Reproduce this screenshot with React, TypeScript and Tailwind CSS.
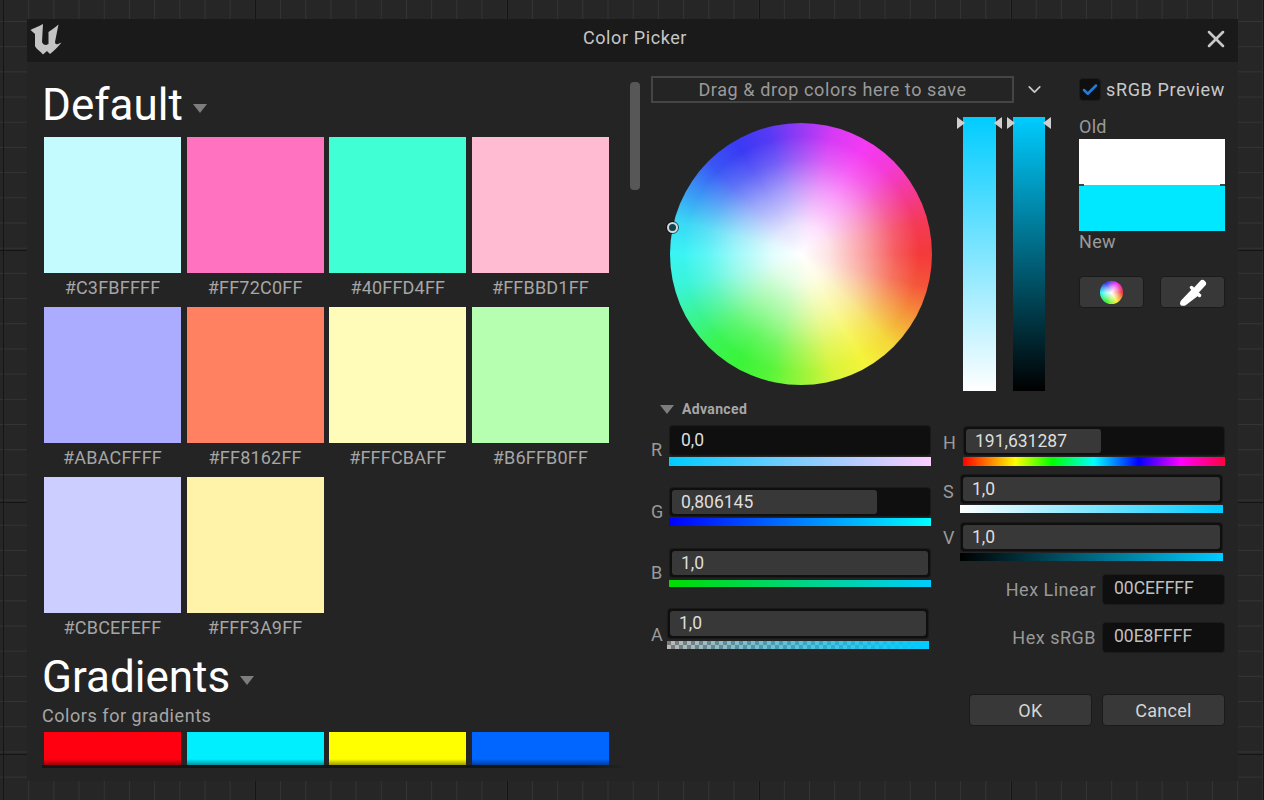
import React from 'react';
import { ChevronDown, Check, X } from 'lucide-react';

const FONT = "font-['Roboto','Liberation_Sans',sans-serif]";

const swatches = [
    { hex: '#C3FBFFFF', bg: 'bg-[#c3fbff]' },
    { hex: '#FF72C0FF', bg: 'bg-[#ff72c0]' },
    { hex: '#40FFD4FF', bg: 'bg-[#40ffd4]' },
    { hex: '#FFBBD1FF', bg: 'bg-[#ffbbd1]' },
    { hex: '#ABACFFFF', bg: 'bg-[#abacff]' },
    { hex: '#FF8162FF', bg: 'bg-[#ff8162]' },
    { hex: '#FFFCBAFF', bg: 'bg-[#fffcba]' },
    { hex: '#B6FFB0FF', bg: 'bg-[#b6ffb0]' },
    { hex: '#CBCEFEFF', bg: 'bg-[#cbcefe]' },
    { hex: '#FFF3A9FF', bg: 'bg-[#fff3a9]' },
];

const gradientSwatches = ['bg-[#ff0010]', 'bg-[#00efff]', 'bg-[#ffff00]', 'bg-[#0066ff]'];

function Caret({ className }: { className?: string }) {
    return (
        <svg width="14" height="9" viewBox="0 0 14 9" className={className}>
            <path d="M0 0h14L7 9z" fill="#7d7d7d" />
        </svg>
    );
}

function UnrealLogo() {
    return (
        <svg width="33" height="33" viewBox="30 22 33 33" className="mb-[2px]">
            <path
                d="M30.5 29C33 27.5 38 26 43 23L42 41Q43 44 46 44L48.5 43L48.500 31C51 29 55 27 58.5 23.5L55 41Q55 44 58 43L61.5 41.5C58 46 54 50 50 53L47 50L43 53.5C40 50 36 48 35 45L35 33Z"
                fill="#c4c4c4"
            />
        </svg>
    );
}

function Eyedropper() {
    return (
        <svg width="28" height="28" viewBox="0 0 28 28">
            <path d="M13 11L19.500 17.500L7 27C5.500 28 3.500 28 2 27.500L1 26C1 24.500 1.500 23 2.500 22z" fill="#fff" />
            <path d="M12.500 9.500L20.500 17.500" stroke="#fff" strokeWidth="3.500" strokeLinecap="round" />
            <path d="M17.500 12L23.500 5.500" stroke="#fff" strokeWidth="7" strokeLinecap="round" />
        </svg>
    );
}

interface ChannelProps {
    label: string;
    value: string;
    labelClass: string;
    width: string;
    inputHeight: string;
    fill: string;
    bar: string;
    barClass: string;
    className?: string;
    checker?: boolean;
}

function Channel({ label, value, labelClass, width, inputHeight, fill, bar, barClass, className, checker }: ChannelProps) {
    return (
        <div className={`flex ${className ?? ''}`}>
            <div className={`${labelClass} shrink-0 text-[18px] leading-[20px] text-[#9a9a9a]`}>{label}</div>
            <div className={width}>
                <div className={`${inputHeight} rounded-[4px] border border-[#1a1a1a] bg-[#0f0f0f] p-[2px]`}>
                    <div className={`h-full rounded-[3px] ${fill}`}>
                        <div className="pl-[9px] text-[17.5px] leading-[25px] whitespace-nowrap text-[#dedede]">{value}</div>
                    </div>
                </div>
                {checker ? (
                    <div className={`${barClass} bg-[repeating-conic-gradient(#b8b8b8_0_25%,#7a7a7a_0_50%)] bg-[length:8px_8px]`}>
                        <div className={`h-full ${bar}`} />
                    </div>
                ) : (
                    <div className={`${barClass} ${bar}`} />
                )}
            </div>
        </div>
    );
}

function HandledBar({ gradient, width }: { gradient: string; width: string }) {
    return (
        <div className={`relative h-[274px] ${width} ${gradient}`}>
            <div className="absolute top-0 -left-[6px] h-0 w-0 border-y-[6px] border-l-[8px] border-y-transparent border-l-[#cfcfcf]" />
            <div className="absolute top-0 -right-[6px] h-0 w-0 border-y-[6px] border-r-[8px] border-y-transparent border-r-[#cfcfcf]" />
        </div>
    );
}

function HexRow({ label, value, className }: { label: string; value: string; className?: string }) {
    return (
        <div className={`flex items-center justify-end ${className ?? ''}`}>
            <span className="mr-[6px] text-[18px] tracking-[0.5px] text-[#999999]">{label}</span>
            <div className="h-[31px] w-[123px] rounded-[4px] border border-[#1c1c1c] bg-[#0f0f0f] pl-[11px] text-[17.5px] leading-[26px] text-[#c0c0c0]">
                {value}
            </div>
        </div>
    );
}

function DialogButton({ label }: { label: string }) {
    return (
        <div className="flex h-[32px] w-[123px] items-center justify-center rounded-[4px] border border-[#1a1a1a] bg-[#383838] text-[18px] tracking-[0.3px] text-[#d4d4d4]">
            {label}
        </div>
    );
}

export default function App() {
    return (
        <div
            className={`${FONT} h-[800px] w-[1264px] overflow-hidden bg-[#262626] bg-[linear-gradient(to_right,#151515_1px,transparent_1px),linear-gradient(to_bottom,#151515_1px,transparent_1px),linear-gradient(to_right,#343434_1px,transparent_1px),linear-gradient(to_bottom,#343434_1px,transparent_1px)] bg-[length:252px_252px,252px_252px,25.2px_25.2px,25.2px_25.2px] bg-[position:3px_250px,3px_250px,3px_21px,3px_21px] pt-[19px] pl-[27px]`}
        >
            <div className="h-[762px] w-[1211px] bg-[#242424]">
                {/* title bar */}
                <div className="flex h-[43px] items-center justify-between bg-[#1a1a1a] pr-[8px] pl-[3px]">
                    <UnrealLogo />
                    <span className="mb-[5px] ml-[5px] text-[18px] leading-[24px] tracking-[0.6px] text-[#c6c6c6]">Color Picker</span>
                    <X size={28} strokeWidth={2.2} color="#c8c8c8" className="mb-[3px]" />
                </div>

                <div className="flex">
                    {/* left list */}
                    <div className="h-[706px] w-[603px] shrink-0 overflow-hidden pt-[19px] pl-[15px]">
                        <div className="flex h-[48px] items-center">
                            <span className="text-[44px] leading-[48px] font-normal text-white">Default</span>
                            <Caret className="mt-[6px] ml-[10px]" />
                        </div>
                        <div className="mt-[8px] grid grid-cols-[137px_137px_137px_137px] gap-x-[5.67px] pl-[2px]">
                            {swatches.map((s) => (
                                <div key={s.hex} className="h-[170px]">
                                    <div className={`h-[136px] w-full ${s.bg}`} />
                                    <div className="mt-[3px] text-center text-[18px] leading-[23px] tracking-[0.2px] text-[#a6a6a6]">{s.hex}</div>
                                </div>
                            ))}
                        </div>
                        <div className="mt-[6px] flex h-[48px] items-center">
                            <span className="text-[44px] leading-[48px] font-normal text-white">Gradients</span>
                            <Caret className="mt-[6px] ml-[10px]" />
                        </div>
                        <div className="mt-[4px] text-[18px] leading-[22px] tracking-[0.55px] text-[#a6a6a6]">Colors for gradients</div>
                        <div className="mt-[5px] grid grid-cols-[137px_137px_137px_137px] gap-x-[5.67px] pl-[2px]">
                            {gradientSwatches.map((bg) => (
                                <div key={bg} className={`h-[33px] ${bg}`}>
                                    <div className="h-[27px]" />
                                    <div className="h-[6px] bg-linear-to-b/srgb from-transparent to-black/40" />
                                </div>
                            ))}
                        </div>
                        <div className="h-[3px] w-[585px] bg-[linear-gradient(to_right,#141414_92%,transparent)]" />
                    </div>

                    {/* scrollbar */}
                    <div className="w-[21px] shrink-0 pt-[20px]">
                        <div className="h-[108px] w-[10px] rounded-[4px] bg-[#575757]" />
                    </div>

                    {/* right side */}
                    <div className="pt-[14px]">
                        <div className="flex">
                            <div className="w-[394px] shrink-0">
                                <div className="flex items-center">
                                    <div className="flex h-[27px] w-[363px] items-center justify-center border-2 border-[#454545] text-[18px] tracking-[0.6px] text-[#9a9a9a]">
                                        Drag &amp; drop colors here to save
                                    </div>
                                    <ChevronDown size={21} color="#c8c8c8" className="ml-[10px]" />
                                </div>
                                <div className="mt-[14px] flex">
                                    <div className="relative mt-[6px] ml-[19px] h-[262px] w-[262px] rounded-full bg-[conic-gradient(from_90deg,#f43a3a,#f4563a,#f4973a,#f4d83a,#f4f43a,#d8f43a,#97f43a,#56f43a,#3af43a,#3af456,#3af497,#3af4d8,#3af4f4,#3ad8f4,#3a97f4,#3a56f4,#3a3af4,#563af4,#973af4,#d83af4,#f43af4,#f43ad8,#f43a97,#f43a56,#f43a3a)]">
                                        <div className="h-full w-full rounded-full bg-[radial-gradient(circle_closest-side,#ffffff_0%,rgba(255,255,255,0.85)_22%,rgba(255,255,255,0.5)_50%,rgba(255,255,255,0.18)_72%,rgba(255,255,255,0)_90%)]" />
                                        <div className="absolute top-[99px] -left-[3px] h-[11px] w-[11px] rounded-full border-2 border-[#d8d8d8] bg-[#10424f] ring-1 ring-black/60" />
                                    </div>
                                    <div className="ml-[31px] flex gap-[17px]">
                                        <HandledBar width="w-[33px]" gradient="bg-linear-to-b/srgb from-[#00ccff] to-white" />
                                        <HandledBar width="w-[32px]" gradient="bg-linear-to-b/srgb from-[#00ccff] to-black" />
                                    </div>
                                </div>
                            </div>

                            <div className="ml-[34px] w-[146px] shrink-0 pt-[2px]">
                                <div className="flex h-[23px] items-center">
                                    <div className="flex h-[23px] w-[23px] items-center justify-center rounded-[4px] border border-[#1c1c1c] bg-[#0f0f0f]">
                                        <Check size={18} strokeWidth={3.4} color="#1a7fe0" />
                                    </div>
                                    <span className="ml-[5px] text-[18px] leading-[23px] tracking-[0.65px] whitespace-nowrap text-[#c9c9c9]">sRGB Preview</span>
                                </div>
                                <div className="mt-[15px] mb-[2px] text-[18px] leading-[21px] tracking-[0.3px] text-[#9a9a9a]">Old</div>
                                <div className="relative">
                                    <div className="h-[46px] bg-white" />
                                    <div className="h-[46px] bg-[#00e8ff]" />
                                    <div className="absolute top-[45px] left-0 h-[2px] w-[5px] bg-[#444444]" />
                                    <div className="absolute top-[45px] right-0 h-[2px] w-[5px] bg-[#444444]" />
                                </div>
                                <div className="text-[18px] leading-[21px] tracking-[0.3px] text-[#9a9a9a]">New</div>
                                <div className="mt-[24px] flex justify-between">
                                    <div className="flex h-[32px] w-[65px] items-center justify-center rounded-[4px] border border-[#1a1a1a] bg-[#383838]">
                                        <div className="h-[23px] w-[23px] rounded-full bg-[conic-gradient(from_90deg,#f43a3a,#f4f43a,#3af43a,#3af4f4,#3a3af4,#f43af4,#f43a3a)]">
                                            <div className="h-full w-full rounded-full bg-[radial-gradient(circle_closest-side,#ffffff_0%,rgba(255,255,255,0.5)_50%,rgba(255,255,255,0)_90%)]" />
                                        </div>
                                    </div>
                                    <div className="flex h-[32px] w-[65px] items-center justify-center rounded-[4px] border border-[#1a1a1a] bg-[#383838]">
                                        <Eyedropper />
                                    </div>
                                </div>
                            </div>
                        </div>

                        <div className="mt-[10px] flex h-[16px] items-center pl-[9px]">
                            <Caret />
                            <span className="ml-[8px] text-[14px] font-bold tracking-[0.35px] text-[#a6a6a6]">Advanced</span>
                        </div>

                        <div className="mt-[8px] flex">
                            <div className="w-[292px] shrink-0">
                                <Channel label="R" value="0,0" labelClass="w-[18px] pt-[15px]" width="w-[262px]" inputHeight="h-[31px]" fill="w-0" barClass="mt-[1px] h-[9px]" bar="bg-linear-to-r/srgb from-[#00ccff] to-[#ffccff]" />
                                <Channel className="mt-[21px]" label="G" value="0,806145" labelClass="w-[18px] pt-[15px]" width="w-[262px]" inputHeight="h-[30px]" fill="w-[205px] bg-[#383838]" barClass="mt-[1px] h-[8px]" bar="bg-linear-to-r/srgb from-[#0000ff] to-[#00ffff]" />
                                <Channel className="mt-[22px]" label="B" value="1,0" labelClass="w-[18px] pt-[15px]" width="w-[262px]" inputHeight="h-[30px]" fill="bg-[#383838]" barClass="mt-[2px] h-[7px]" bar="bg-linear-to-r/srgb from-[#00dd00] to-[#00ccff]" />
                                <Channel className="mt-[21px]" label="A" value="1,0" labelClass="w-[16px] pt-[17px]" width="w-[262px]" inputHeight="h-[31px]" fill="bg-[#383838]" barClass="mt-[2px] h-[8px]" checker bar="bg-linear-to-r/srgb from-transparent to-[#00ccff]" />
                            </div>
                            <div className="w-[282px] shrink-0 pt-[1px]">
                                <Channel label="H" value="191,631287" labelClass="w-[20px] pt-[7px]" width="w-[262px]" inputHeight="h-[30px]" fill="w-[135px] bg-[#383838]" barClass="mt-[1px] h-[9px]" bar="bg-[linear-gradient(to_right,#ff0000,#ffff00_20%,#00ff00_34%,#00ffff_50%,#0000ff_67%,#ff00ff_83%,#ff0040)]" />
                                <Channel className="mt-[8px]" label="S" value="1,0" labelClass="w-[17px] pt-[8px]" width="w-[263px]" inputHeight="h-[30px]" fill="bg-[#383838]" barClass="mt-[1px] h-[8px]" bar="bg-linear-to-r/srgb from-white to-[#00ccff]" />
                                <Channel className="mt-[9px]" label="V" value="1,0" labelClass="w-[17px] pt-[6px]" width="w-[263px]" inputHeight="h-[30px]" fill="bg-[#383838]" barClass="mt-[1px] h-[8px]" bar="bg-linear-to-r/srgb from-black to-[#00ccff]" />
                                <HexRow className="mt-[13px]" label="Hex Linear" value="00CEFFFF" />
                                <HexRow className="mt-[17px]" label="Hex sRGB" value="00E8FFFF" />
                                <div className="mt-[41px] flex justify-end gap-[10px]">
                                    <DialogButton label="OK" />
                                    <DialogButton label="Cancel" />
                                </div>
                            </div>
                        </div>
                    </div>
                </div>
            </div>
        </div>
    );
}
